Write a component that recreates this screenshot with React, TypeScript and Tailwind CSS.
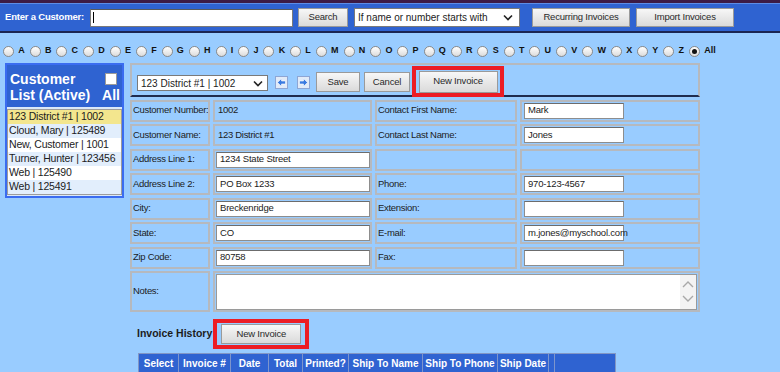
import React from 'react';

const LETTERS = 'ABCDEFGHIJKLMNOPQRSTUVWXYZ'.split('');

const CUSTOMERS = [
  '123 District #1 | 1002',
  'Cloud, Mary | 125489',
  'New, Customer | 1001',
  'Turner, Hunter | 123456',
  'Web | 125490',
  'Web | 125491',
];

const HISTORY_COLS: [string, string][] = [
  ['Select', 'w-[40px]'],
  ['Invoice #', 'w-[52px]'],
  ['Date', 'w-[38px]'],
  ['Total', 'w-[34px]'],
  ['Printed?', 'w-[46px]'],
  ['Ship To Name', 'w-[74px]'],
  ['Ship To Phone', 'w-[75px]'],
  ['Ship Date', 'w-[51px]'],
  ['', 'w-[6px]'],
  ['', 'flex-1'],
];

function Btn({ children, className = '' }: { children: React.ReactNode; className?: string }) {
  return (
    <div
      className={`flex items-center justify-center border border-[#9a9a9a] bg-gradient-to-b from-[#f7f7f7] to-[#dadada] text-[9.5px] tracking-[-0.2px] text-[#2a2a2a] ${className}`}
    >
      {children}
    </div>
  );
}

function Chevron() {
  return (
    <svg width="10" height="7" viewBox="0 0 10 7">
      <path d="M1 1.5 L5 5.5 L9 1.5" fill="none" stroke="#222" strokeWidth="1.6" />
    </svg>
  );
}

function Radio({ checked = false }: { checked?: boolean }) {
  return (
    <span className="ml-[5px] mr-[4.2px] flex h-[11px] w-[11px] shrink-0 items-center justify-center rounded-full border border-[#8a8a8a] bg-gradient-to-b from-white to-[#dcdcdc]">
      {checked && <span className="h-[5px] w-[5px] rounded-full bg-[#111]" />}
    </span>
  );
}

function NavArrow({ dir }: { dir: 'left' | 'right' }) {
  const d =
    dir === 'left'
      ? 'M2.5 6.5 L6.5 2.5 V5 H10.5 V8 H6.5 V10.5 Z'
      : 'M10.5 6.5 L6.5 2.5 V5 H2.5 V8 H6.5 V10.5 Z';
  return (
    <svg width="13" height="13" viewBox="0 0 13 13">
      <rect x="0.5" y="0.5" width="12" height="12" fill="#e2ebf8" stroke="#8ea6d4" />
      <path d={d} fill="#3b7be0" stroke="#ffffff" strokeWidth="0.6" />
    </svg>
  );
}

function Cell({ children, className = '' }: { children?: React.ReactNode; className?: string }) {
  return (
    <div
      className={`flex h-[22px] items-center overflow-hidden whitespace-nowrap border-2 border-[#b6b9be] pl-[1px] ${className}`}
    >
      {children}
    </div>
  );
}

function Field({ value = '', wide = false }: { value?: string; wide?: boolean }) {
  return (
    <div
      className={`flex h-[16px] items-center border border-[#8d8d8d] border-t-[#6c6c6c] bg-white pl-[3px] text-[9.5px] tracking-[-0.2px] text-[#222] ${
        wide ? 'w-[154px]' : 'ml-[1px] w-[100px]'
      }`}
    >
      {value}
    </div>
  );
}

type Row = {
  l1: string;
  v1: React.ReactNode;
  l2: string;
  v2: React.ReactNode;
};

const ROWS: Row[] = [
  { l1: 'Customer Number:', v1: <span className="pl-[2px]">1002</span>, l2: 'Contact First Name:', v2: <Field value="Mark" /> },
  { l1: 'Customer Name:', v1: <span className="pl-[2px]">123 District #1</span>, l2: 'Contact Last Name:', v2: <Field value="Jones" /> },
  { l1: 'Address Line 1:', v1: <Field wide value="1234 State Street" />, l2: '', v2: null },
  { l1: 'Address Line 2:', v1: <Field wide value="PO Box 1233" />, l2: 'Phone:', v2: <Field value="970-123-4567" /> },
  { l1: 'City:', v1: <Field wide value="Breckenridge" />, l2: 'Extension:', v2: <Field /> },
  { l1: 'State:', v1: <Field wide value="CO" />, l2: 'E-mail:', v2: <Field value="m.jones@myschool.com" /> },
  { l1: 'Zip Code:', v1: <Field wide value="80758" />, l2: 'Fax:', v2: <Field /> },
];

export default function App() {
  return (
    <div className="h-[372px] w-[780px] overflow-hidden bg-[#99ccff] font-['Liberation_Sans',Arial,sans-serif] text-[#1c1c1c]">
      {/* top search bar */}
      <div className="h-[3px] bg-[#3c1b45]" />
      <div className="flex h-[28px] items-center border-t border-[#5d8de6] bg-[#2f63d1] pl-[5px]">
        <span className="w-[85px] text-[9.5px] font-bold tracking-[-0.2px] text-white">Enter a Customer:</span>
        <div className="flex h-[18px] w-[203px] items-center border border-[#7a7a7a] border-t-[#5a5a5a] bg-white pl-[2px]">
          <span className="h-[11px] w-[1px] bg-black" />
        </div>
        <Btn className="ml-[5px] h-[19px] w-[50px]">Search</Btn>
        <div className="ml-[6px] flex h-[19px] w-[166px] items-center justify-between border border-[#7a7a7a] bg-white pl-[3px] pr-[6px] text-[10px] text-[#222]">
          <span>If name or number starts with</span>
          <Chevron />
        </div>
        <Btn className="ml-[12px] h-[19px] w-[98px]">Recurring Invoices</Btn>
        <Btn className="ml-[6px] h-[19px] w-[98px]">Import Invoices</Btn>
      </div>
      <div className="h-[2px] bg-[#1b2552]" />

      {/* alphabet filter */}
      <div className="flex h-[30px] items-center pt-[6px] text-[9px] font-bold text-[#111]">
        <span className="-ml-[2px]" />
        {LETTERS.map((l) => (
          <span key={l} className="flex items-center">
            <Radio />
            {l}
          </span>
        ))}
        <span className="flex items-center">
          <Radio checked />
          All
        </span>
      </div>

      <div className="flex items-start gap-[6px] pl-[5px]">
        {/* customer list */}
        <div className="w-[119px] border-2 border-[#3a6cf0] bg-[#dbe8f8] pb-[1px]">
          <div className="flex h-[42px] justify-between bg-[#2f63d1] pl-[3px] pr-[2px] pt-[6px] text-[14px] font-bold leading-[16px] text-white">
            <div>
              <div>Customer</div>
              <div>List (Active)</div>
            </div>
            <div className="flex flex-col items-center">
              <span className="mt-[2px] h-[12px] w-[12px] border border-[#9a9a9a] bg-white" />
              <span className="mt-[2px]">All</span>
            </div>
          </div>
          <div className="mt-[2px] border border-[#9c9c9c] bg-white text-[10.5px] tracking-[-0.2px]">
            {CUSTOMERS.map((c, i) => (
              <div
                key={c}
                className={`flex h-[14px] items-center whitespace-nowrap pl-[1px] ${
                  i === 0 ? 'bg-[#f3e68e]' : i % 2 === 1 ? 'bg-[#e2eefc]' : 'bg-white'
                }`}
              >
                {c}
              </div>
            ))}
          </div>
        </div>

        {/* customer form */}
        <div className="w-[570px]">
          <div className="grid grid-cols-[80px_159px_142px_180px] gap-x-[3px] gap-y-[2.5px] text-[9.5px] tracking-[-0.3px]">
            <div className="col-span-4 flex h-[34px] items-start border-2 border-[#b6b9be] border-b-[#1f2c4f] pl-[5px]">
              <div className="mt-[10px] flex h-[16px] w-[131px] items-center justify-between border border-[#7a7a7a] bg-white pl-[3px] pr-[4px] text-[10px] tracking-normal text-[#222]">
                <span>123 District #1 | 1002</span>
                <Chevron />
              </div>
              <div className="ml-[7px] mt-[11px] flex gap-[9px]">
                <NavArrow dir="left" />
                <NavArrow dir="right" />
              </div>
              <Btn className="ml-[6px] mt-[7px] h-[20px] w-[44px]">Save</Btn>
              <Btn className="ml-[4px] mt-[7px] h-[20px] w-[46px]">Cancel</Btn>
              <div className="relative z-10 ml-[2px] mt-[1px] flex h-[31px] w-[92px] items-center justify-center border-4 border-[#ec1c24]">
                <Btn className="h-[22px] w-[79px]">New Invoice</Btn>
              </div>
            </div>

            {ROWS.map((r) => (
              <React.Fragment key={r.l1}>
                <Cell>{r.l1}</Cell>
                <Cell className="pl-[0px]">{r.v1}</Cell>
                <Cell>{r.l2}</Cell>
                <Cell>{r.v2}</Cell>
              </React.Fragment>
            ))}

            <div className="flex h-[41px] items-center border-2 border-[#b6b9be] pl-[1px]">Notes:</div>
            <div className="col-span-3 flex h-[41px] items-center border-2 border-[#b6b9be] px-[1px]">
              <div className="flex h-[36px] w-full border border-[#9a9a9a] bg-white">
                <div className="flex-1" />
                <div className="flex w-[16px] flex-col items-center justify-around bg-[#f3f3f3] py-[2px]">
                  <svg width="12" height="8" viewBox="0 0 12 8">
                    <path d="M1 7 L6 2 L11 7" fill="none" stroke="#a8a8a8" strokeWidth="1.4" />
                  </svg>
                  <svg width="12" height="8" viewBox="0 0 12 8">
                    <path d="M1 1 L6 6 L11 1" fill="none" stroke="#a8a8a8" strokeWidth="1.4" />
                  </svg>
                </div>
              </div>
            </div>
          </div>

          {/* invoice history */}
          <div className="ml-[7px] mt-[7px] flex items-center">
            <span className="text-[10.5px] font-bold">Invoice History</span>
            <div className="ml-[1px] flex h-[30px] w-[96px] items-center justify-center border-4 border-[#ec1c24]">
              <Btn className="h-[20px] w-[80px]">New Invoice</Btn>
            </div>
          </div>
          <div className="ml-[8px] mt-[4px] flex h-[20px] w-[478px] border border-[#8296c4] bg-[#2f63d1] text-[10px] font-bold text-white">
            {HISTORY_COLS.map(([t, w], i) => (
              <div
                key={i}
                className={`flex items-center justify-center whitespace-nowrap border-r border-[#7d95cc] last:border-r-0 ${w}`}
              >
                {t}
              </div>
            ))}
          </div>
        </div>
      </div>
    </div>
  );
}
